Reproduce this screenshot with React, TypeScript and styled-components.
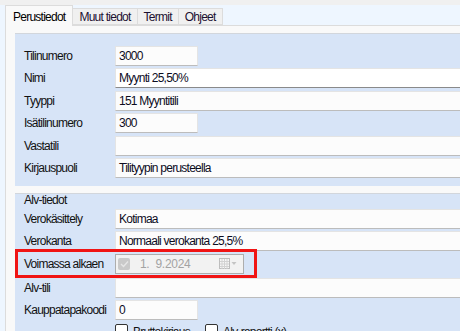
import styled, { createGlobalStyle } from "styled-components";

const GlobalStyle = createGlobalStyle`
  html, body {
    margin: 0;
    padding: 0;
    background: #eef6ff;
  }
  body {
    font-family: "Liberation Sans", Arial, sans-serif;
    font-size: 12px;
    letter-spacing: -0.75px;
    color: #111;
  }
`;

const Window = styled.div`
  width: 460px;
  height: 331px;
  overflow: hidden;
  background: #eef6ff;
  border-top: 5px solid #f0f0f0;
  box-sizing: border-box;
  display: flex;
  flex-direction: column;
`;

const TabStrip = styled.div`
  display: flex;
  align-items: flex-end;
  height: 24px;
  padding-left: 5px;
  position: relative;
  z-index: 1;
`;

const Tab = styled.div<{ $active?: boolean }>`
  box-sizing: border-box;
  height: ${({ $active }) => ($active ? "21px" : "17px")};
  margin-bottom: ${({ $active }) => ($active ? "-1px" : "0")};
  padding: ${({ $active }) => ($active ? "2px 7px 0 7px" : "1px 6px 0 6px")};
  background: ${({ $active }) => ($active ? "#f9f9f9" : "#f0f0f0")};
  border: 1px solid #dcdcdc;
  border-bottom: ${({ $active }) => ($active ? "none" : "1px solid #dcdcdc")};
  margin-left: -1px;
  display: flex;
  align-items: center;
  white-space: nowrap;
  color: ${({ $active }) => ($active ? "#000" : "#1c1030")};

  &:first-child {
    margin-left: 0;
  }
`;

const TabPage = styled.div`
  flex: 1;
  margin-left: 5px;
  background: #f9f9f9;
  border-top: 1px solid #dcdcdc;
  border-left: 1px solid #dcdcdc;
  padding: 7px 0 0 9px;
  display: flex;
  flex-direction: column;
  gap: 7px;
`;

const Panel = styled.div<{ $gap: number }>`
  width: 540px;
  background: #d7e4f7;
  border-top: 1px solid #d2d6dc;
  display: flex;
  flex-direction: column;
  gap: ${({ $gap }) => $gap}px;
`;

const FirstPanel = styled(Panel)`
  padding: 12px 0 8px 0;
`;

const SecondPanel = styled(Panel)`
  flex: 1;
  padding: 0;
`;

const GroupTitle = styled.div`
  height: 15px;
  line-height: 13px;
  padding-left: 9px;
  margin-bottom: -2.25px;
`;

const Row = styled.div`
  display: grid;
  grid-template-columns: 91px 1fr;
  align-items: center;
  height: 20px;
  padding-left: 9px;
`;

const HighlightRow = styled.div`
  display: grid;
  grid-template-columns: 91px auto;
  align-items: center;
  width: fit-content;
  border: 3px solid #f01414;
  padding: 2px 10px 0 6px;
  margin: -4.5px 0 -2.5px 0;
  height: 21px;
  box-sizing: content-box;
`;

const Label = styled.span`
  white-space: nowrap;
`;

const TextBox = styled.div<{ $short?: boolean; $focused?: boolean }>`
  box-sizing: border-box;
  height: 20px;
  width: ${({ $short }) => ($short ? "83px" : "auto")};
  background: ${({ $focused }) => ($focused ? "#ffffff" : "#fcfcfc")};
  border: 1px solid #e4e4e4;
  border-bottom: 1px solid ${({ $focused }) => ($focused ? "#8a8a8a" : "#bcbcbc")};
  padding: 0 3px;
  display: flex;
  align-items: center;
  white-space: nowrap;
  color: #0c0c1e;
`;

const DatePicker = styled.div`
  box-sizing: border-box;
  width: 129px;
  height: 20px;
  background: #f2f2f2;
  border: 1px solid #adadad;
  display: flex;
  align-items: center;
  padding: 0 6px 0 2px;
  color: #a3a3a3;
`;

const DisabledCheck = styled.span`
  width: 12px;
  height: 12px;
  border-radius: 2px;
  background: #c9c9c9;
  display: inline-flex;
  align-items: center;
  justify-content: center;
  margin-right: 10px;
`;

const DateText = styled.span`
  flex: 1;
  white-space: pre;
  letter-spacing: -0.3px;
`;

const CheckRow = styled.div`
  display: flex;
  align-items: flex-start;
  gap: 4px;
  padding-left: 100px;
  margin-top: 1.75px;
`;

const CheckItem = styled.label<{ $width: number }>`
  display: flex;
  align-items: flex-start;
  gap: 5px;
  width: ${({ $width }) => $width}px;
  white-space: nowrap;
  line-height: 13px;
  padding-top: 2px;
`;

const CheckBox = styled.span`
  box-sizing: border-box;
  flex: none;
  width: 13px;
  height: 13px;
  margin-top: -2px;
  border: 1px solid #333;
  border-radius: 2px;
  background: #fff;
`;

const CalendarIcon = () => (
  <svg width="18" height="12" viewBox="0 0 18 12">
    <rect x="0.5" y="0.5" width="10" height="10" fill="#f6f6f6" stroke="#bdbdbd" />
    <path d="M3 1v10M5.5 1v10M8 1v10M1 3.5h9M1 6h9M1 8.5h9" stroke="#d2d2d2" strokeWidth="1" />
    <path d="M12.5 4h5l-2.5 3z" fill="#c4c4c4" />
  </svg>
);

export default function App() {
  return (
    <>
      <GlobalStyle />
      <Window>
        <TabStrip>
          <Tab $active>Perustiedot</Tab>
          <Tab>Muut tiedot</Tab>
          <Tab>Termit</Tab>
          <Tab>Ohjeet</Tab>
        </TabStrip>
        <TabPage>
          <FirstPanel $gap={2.4}>
            <Row>
              <Label>Tilinumero</Label>
              <TextBox $short>3000</TextBox>
            </Row>
            <Row>
              <Label>Nimi</Label>
              <TextBox $focused>Myynti 25,50%</TextBox>
            </Row>
            <Row>
              <Label>Tyyppi</Label>
              <TextBox>151 Myyntitili</TextBox>
            </Row>
            <Row>
              <Label>Isätilinumero</Label>
              <TextBox $short>300</TextBox>
            </Row>
            <Row>
              <Label>Vastatili</Label>
              <TextBox />
            </Row>
            <Row>
              <Label>Kirjauspuoli</Label>
              <TextBox>Tilityypin perusteella</TextBox>
            </Row>
          </FirstPanel>
          <SecondPanel $gap={2.25}>
            <GroupTitle>Alv-tiedot</GroupTitle>
            <Row>
              <Label>Verokäsittely</Label>
              <TextBox>Kotimaa</TextBox>
            </Row>
            <Row>
              <Label>Verokanta</Label>
              <TextBox>Normaali verokanta 25,5%</TextBox>
            </Row>
            <HighlightRow>
              <Label>Voimassa alkaen</Label>
              <DatePicker>
                <DisabledCheck>
                  <svg width="9" height="8" viewBox="0 0 9 8">
                    <path d="M1 4l2.5 2.5L8 1.5" fill="none" stroke="#e6e6e6" strokeWidth="1.3" />
                  </svg>
                </DisabledCheck>
                <DateText>1.  9.2024</DateText>
                <CalendarIcon />
              </DatePicker>
            </HighlightRow>
            <Row>
              <Label>Alv-tili</Label>
              <TextBox />
            </Row>
            <Row>
              <Label>Kauppatapakoodi</Label>
              <TextBox $short>0</TextBox>
            </Row>
            <CheckRow>
              <CheckItem $width={86}>
                <CheckBox />
                Bruttokirjaus
              </CheckItem>
              <CheckItem $width={120}>
                <CheckBox />
                Alv-raportti (x)
              </CheckItem>
            </CheckRow>
          </SecondPanel>
        </TabPage>
      </Window>
    </>
  );
}
